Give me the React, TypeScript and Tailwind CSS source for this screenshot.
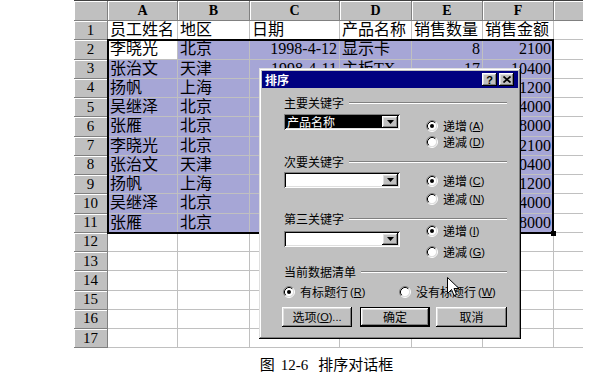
import React from "react";
import clsx from "clsx";

type Col = { key: string; w: string; right?: boolean; last?: boolean };

const cols: Col[] = [
  { key: "A", w: "w-[70px]" },
  { key: "B", w: "w-[72px]" },
  { key: "C", w: "w-[90px]", right: true },
  { key: "D", w: "w-[72px]" },
  { key: "E", w: "w-[71px]", right: true },
  { key: "F", w: "w-[71px]", right: true },
  { key: "G", w: "w-[29px]", last: true },
];

const head = ["员工姓名", "地区", "日期", "产品名称", "销售数量", "销售金额"];

const data = [
  ["李晓光", "北京", "1998-4-12", "显示卡", "8", "2100"],
  ["张治文", "天津", "1998-4-11", "主板TX", "17", "10400"],
  ["扬帆", "上海", "1998-4-13", "内存条", "6", "1200"],
  ["吴继泽", "北京", "1998-4-15", "硬盘", "20", "24000"],
  ["张雁", "北京", "1998-4-16", "CPU", "14", "28000"],
  ["李晓光", "北京", "1998-4-17", "显示卡", "8", "2100"],
  ["张治文", "天津", "1998-4-18", "主板TX", "17", "10400"],
  ["扬帆", "上海", "1998-4-19", "内存条", "6", "1200"],
  ["吴继泽", "北京", "1998-4-20", "硬盘", "20", "24000"],
  ["张雁", "北京", "1998-4-21", "CPU", "14", "28000"],
];

const raised =
  "shadow-[inset_-1px_-1px_#000,inset_1px_1px_#fff,inset_-2px_-2px_#808080,inset_2px_2px_#dfdfdf]";

function Row({ n, cells, sel }: { n: number; cells: string[]; sel: boolean }) {
  return (
    <div className="flex h-[19.25px]">
      <div className="w-[34px] shrink-0 flex items-center justify-center bg-[#c0c0c0] border-r border-b border-[#808080] shadow-[inset_1px_1px_#fff] text-[15px] leading-none">
        {n}
      </div>
      {cols.map((c, i) => {
        const on = sel && i < 6 && !(n === 2 && i === 0);
        return (
          <div
            key={c.key}
            className={clsx(
              c.w,
              "shrink-0 border-b border-[#c0c0c0] px-[2px] flex items-center overflow-hidden whitespace-nowrap text-[16px] leading-none",
              c.last ? "border-r-0" : "border-r",
              on ? "bg-[#a6a6d6]" : "bg-white",
              sel && c.right ? "justify-end" : "justify-start"
            )}
          >
            {cells[i] ?? ""}
          </div>
        );
      })}
    </div>
  );
}

function Radio({ on }: { on?: boolean }) {
  return (
    <svg width="12" height="12" viewBox="0 0 12 12" className="shrink-0">
      <circle cx="6" cy="6" r="4.5" fill="#fff" />
      <path d="M2.11 9.89A5.5 5.5 0 0 1 9.89 2.11" fill="none" stroke="#808080" />
      <path d="M9.89 2.11A5.5 5.5 0 0 1 2.11 9.89" fill="none" stroke="#fff" />
      <path d="M2.82 9.18A4.5 4.5 0 0 1 9.18 2.82" fill="none" stroke="#000" />
      <path d="M9.18 2.82A4.5 4.5 0 0 1 2.82 9.18" fill="none" stroke="#dfdfdf" />
      {on && <circle cx="6" cy="6" r="2" fill="#000" />}
    </svg>
  );
}

function SortRadio({ on, text, k }: { on?: boolean; text: string; k: string }) {
  return (
    <div className="flex items-center h-[12px]">
      <Radio on={on} />
      <span className="ml-[5px] whitespace-nowrap">{text}</span>
      <span className="ml-[2px] whitespace-nowrap text-[11px] font-['Liberation_Sans',sans-serif]">
        (<span className="underline">{k}</span>)
      </span>
    </div>
  );
}

function GroupLabel({ text, className }: { text: string; className: string }) {
  return (
    <div className={clsx("flex items-center h-[12px]", className)}>
      <span className="whitespace-nowrap">{text}</span>
      <div className="ml-[5px] flex-1 h-[2px] border-t border-t-[#808080] border-b border-b-white" />
    </div>
  );
}

function Combo({ value }: { value?: string }) {
  return (
    <div className="w-[116px] h-[16px] shrink-0 bg-white flex p-[2px] shadow-[inset_1px_1px_#808080,inset_-1px_-1px_#fff,inset_2px_2px_#000,inset_-2px_-2px_#dfdfdf]">
      <div className="flex-1 flex items-stretch">
        {value && (
          <span className="bg-black text-white w-full flex items-center pl-[1px]">{value}</span>
        )}
      </div>
      <div className={clsx("w-[16px] bg-[#c0c0c0] flex items-center justify-center", raised)}>
        <svg width="7" height="4" viewBox="0 0 7 4">
          <path d="M0 0H7L3.5 4Z" fill="#000" />
        </svg>
      </div>
    </div>
  );
}

function Btn({ children, className, def }: { children: React.ReactNode; className: string; def?: boolean }) {
  return (
    <div className={clsx("h-[20px] bg-[#c0c0c0]", def && "border border-black", className)}>
      <div className={clsx("h-full w-full flex items-center justify-center whitespace-nowrap", raised)}>
        {children}
      </div>
    </div>
  );
}

function Dialog() {
  return (
    <div className="absolute left-[185px] top-[68px] w-[262px] h-[271px] bg-[#c0c0c0] p-[3px] shadow-[inset_-1px_-1px_#000,inset_1px_1px_#dfdfdf,inset_-2px_-2px_#808080,inset_2px_2px_#fff] text-[12px] leading-[12px] text-black font-['Noto_Sans_CJK_SC',sans-serif]">
      <div className="h-[17px] bg-[#000080] flex items-center pl-[3px] pr-[4px]">
        <span className="text-white font-bold">排序</span>
        <div className="ml-auto flex gap-[2px]">
          <div className={clsx("w-[15px] h-[13px] bg-[#c0c0c0] flex items-center justify-center font-bold text-[11px] font-['Liberation_Sans',sans-serif]", raised)}>
            ?
          </div>
          <div className={clsx("w-[15px] h-[13px] bg-[#c0c0c0] flex items-center justify-center", raised)}>
            <svg width="8" height="7" viewBox="0 0 8 7">
              <path d="M0.5 0.5L7.5 6.5M7.5 0.5L0.5 6.5" stroke="#000" strokeWidth="1.7" />
            </svg>
          </div>
        </div>
      </div>

      <div className="pl-[22px] pr-[11px]">
        <GroupLabel text="主要关键字" className="mt-[9px]" />
        <div className="flex items-start mt-[5px]">
          <Combo value="产品名称" />
          <div className="ml-[26px] mt-[6px] flex flex-col gap-[4px]">
            <SortRadio on text="递增" k="A" />
            <SortRadio text="递减" k="D" />
          </div>
        </div>

        <GroupLabel text="次要关键字" className="mt-[8px]" />
        <div className="flex items-start mt-[4px]">
          <Combo />
          <div className="ml-[26px] mt-[3px] flex flex-col gap-[6px]">
            <SortRadio on text="递增" k="C" />
            <SortRadio text="递减" k="N" />
          </div>
        </div>

        <GroupLabel text="第三关键字" className="mt-[8px]" />
        <div className="flex items-start mt-[6px]">
          <Combo />
          <div className="ml-[26px] mt-[-6px] flex flex-col gap-[9px]">
            <SortRadio on text="递增" k="I" />
            <SortRadio text="递减" k="G" />
          </div>
        </div>

        <GroupLabel text="当前数据清单" className="mt-[8px]" />
        <div className="flex mt-[8px] ml-[-1px]">
          <div className="w-[116px]">
            <SortRadio on text="有标题行" k="R" />
          </div>
          <SortRadio text="没有标题行" k="W" />
        </div>

        <div className="flex mt-[9px] ml-[-2px]">
          <Btn className="w-[70px]">
            <span>选项</span>
            <span className="text-[11px] font-['Liberation_Sans',sans-serif]">
              (<span className="underline">O</span>)...
            </span>
          </Btn>
          <Btn className="w-[70px] ml-[8px]" def>
            确定
          </Btn>
          <Btn className="w-[71px] ml-[6px]">取消</Btn>
        </div>
      </div>
    </div>
  );
}

export default function App() {
  const rows: { cells: string[]; sel: boolean }[] = [
    { cells: head, sel: false },
    ...data.map((d) => ({ cells: d, sel: true })),
    ...Array.from({ length: 6 }, () => ({ cells: [] as string[], sel: false })),
  ];

  return (
    <div className="w-[590px] h-[378px] bg-white overflow-hidden text-black font-['Liberation_Serif','Noto_Sans_CJK_SC',serif]">
      <div className="relative ml-[74px] w-[509px]">
        <div className="flex h-[21px] border-t border-[#404040]">
          <div className="w-[34px] shrink-0 bg-[#c0c0c0] border-r border-b border-[#808080] shadow-[inset_1px_1px_#fff]" />
          {cols.map((c) => (
            <div
              key={c.key}
              className={clsx(
                c.w,
                "shrink-0 bg-[#c0c0c0] border-b border-[#808080] shadow-[inset_1px_1px_#fff] flex items-center justify-center font-bold text-[14px] leading-none",
                c.last ? "border-r-0" : "border-r"
              )}
            >
              {c.last ? "" : c.key}
            </div>
          ))}
        </div>

        {rows.map((r, i) => (
          <Row key={i} n={i + 1} cells={r.cells} sel={r.sel} />
        ))}

        <div className="absolute left-[33px] top-[39px] w-[447px] h-[195px] border-2 border-black">
          <div className="absolute -right-[4px] -bottom-[4px] w-[5px] h-[5px] bg-black" />
        </div>

        <Dialog />

        <svg className="absolute left-[373px] top-[277px]" width="13" height="21" viewBox="0 0 13 21">
          <path d="M0.5 0.5V16.5L4.5 12.5L7 18.5L9.5 17.5L7 11.5H12Z" fill="#fff" stroke="#000" />
        </svg>
      </div>

      <div className="ml-[72px] w-[509px] mt-[7px] h-[20px] flex items-center justify-center text-[15px] leading-none">
        <span>图</span>
        <span className="ml-[6px]">12-6</span>
        <span className="ml-[10px]">排序对话框</span>
      </div>
    </div>
  );
}
